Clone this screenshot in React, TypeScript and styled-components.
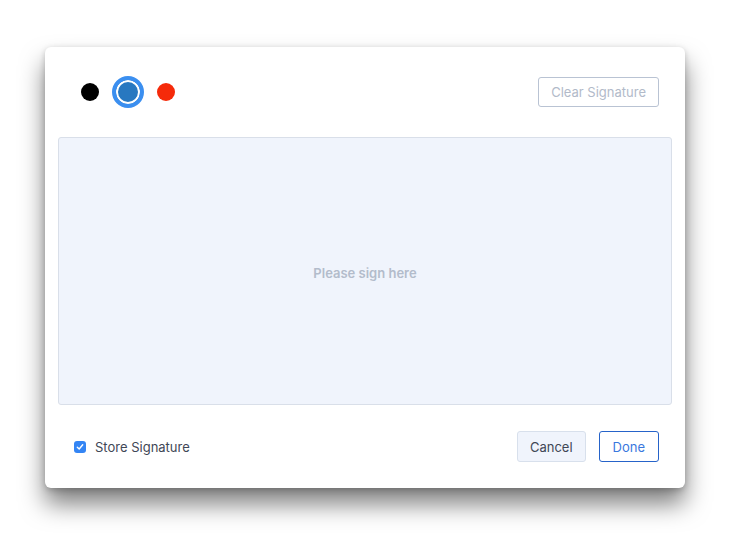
import React, { useState } from "react";
import styled, { createGlobalStyle } from "styled-components";

const GlobalStyle = createGlobalStyle`
  html, body {
    margin: 0;
    padding: 0;
    background: #ffffff;
    font-family: Inter, "Open Sans", "Liberation Sans", sans-serif;
  }
`;

const Page = styled.div`
  width: 734px;
  height: 541px;
  padding: 47px 0 0 45px;
  box-sizing: border-box;
`;

const Modal = styled.div`
  width: 640px;
  height: 441px;
  background: #fff;
  border-radius: 6px;
  box-shadow: 0 16px 24px rgba(0, 0, 0, 0.5), 0 2px 6px rgba(0, 0, 0, 0.2);
  display: flex;
  flex-direction: column;
  padding: 0 13px;
  box-sizing: border-box;
`;

const Header = styled.div`
  height: 90px;
  display: flex;
  align-items: center;
  justify-content: space-between;
  padding: 0 13px 0 23px;
`;

const Swatches = styled.div`
  display: flex;
  align-items: center;
  gap: 13px;
`;

const Swatch = styled.button<{ $color: string; $active?: boolean }>`
  width: ${(p) => (p.$active ? "32px" : "18px")};
  height: ${(p) => (p.$active ? "32px" : "18px")};
  border-radius: 50%;
  padding: 0;
  margin: 0;
  background: ${(p) => p.$color};
  border: ${(p) => (p.$active ? "4px solid #3b8ff0" : "none")};
  box-shadow: ${(p) => (p.$active ? "inset 0 0 0 2px #fff" : "none")};
  box-sizing: border-box;
  cursor: pointer;
`;

const OutlineButton = styled.button`
  height: 30px;
  padding: 0 12px;
  border: 1px solid #b9c3d3;
  border-radius: 3px;
  background: #fff;
  color: #b2bac9;
  font-family: inherit;
  font-size: 13px;
  cursor: pointer;
`;

const Canvas = styled.div`
  height: 268px;
  padding-top: 3px;
  border: 1px solid #d9dfe9;
  border-radius: 3px;
  background: #f0f4fc;
  display: flex;
  align-items: center;
  justify-content: center;
  color: #b3bccb;
  font-size: 13px;
  font-weight: 600;
  box-sizing: border-box;
`;

const Footer = styled.div`
  flex: 1;
  display: flex;
  align-items: center;
  justify-content: space-between;
  padding: 0 13px 0 16px;
`;

const CheckLabel = styled.label`
  display: flex;
  align-items: center;
  gap: 9px;
  color: #3f4756;
  font-size: 13px;
  cursor: pointer;
`;

const Box = styled.span<{ $checked: boolean }>`
  width: 12px;
  height: 12px;
  border-radius: 3px;
  background: ${(p) => (p.$checked ? "#3485f4" : "#fff")};
  border: ${(p) => (p.$checked ? "none" : "1px solid #b9c3d3")};
  display: flex;
  align-items: center;
  justify-content: center;
  box-sizing: border-box;
`;

const Actions = styled.div`
  display: flex;
  gap: 13px;
`;

const ActionButton = styled.button<{ $primary?: boolean }>`
  height: 31px;
  padding: 0 ${(p) => (p.$primary ? "13px" : "12px")};
  border-radius: 3px;
  font-family: inherit;
  font-size: 13px;
  cursor: pointer;
  background: ${(p) => (p.$primary ? "#fff" : "#f0f4fc")};
  border: 1px solid ${(p) => (p.$primary ? "#2663c9" : "#d8e0ec")};
  color: ${(p) => (p.$primary ? "#3a78de" : "#3f4756")};
`;

const colors = ["#000000", "#2878c0", "#f52a0a"];

export default function App() {
  const [active, setActive] = useState(1);
  const [store, setStore] = useState(true);

  return (
    <Page>
      <GlobalStyle />
      <Modal>
        <Header>
          <Swatches>
            {colors.map((c, i) => (
              <Swatch key={c} $color={c} $active={i === active} onClick={() => setActive(i)} />
            ))}
          </Swatches>
          <OutlineButton>Clear Signature</OutlineButton>
        </Header>
        <Canvas>Please sign here</Canvas>
        <Footer>
          <CheckLabel onClick={() => setStore(!store)}>
            <Box $checked={store}>
              {store && (
                <svg width="8" height="8" viewBox="0 0 8 8">
                  <path d="M1.3 4.2 L3.2 6 L6.7 1.8" fill="none" stroke="#fff" strokeWidth="1.4" strokeLinecap="round" strokeLinejoin="round" />
                </svg>
              )}
            </Box>
            Store Signature
          </CheckLabel>
          <Actions>
            <ActionButton>Cancel</ActionButton>
            <ActionButton $primary>Done</ActionButton>
          </Actions>
        </Footer>
      </Modal>
    </Page>
  );
}
